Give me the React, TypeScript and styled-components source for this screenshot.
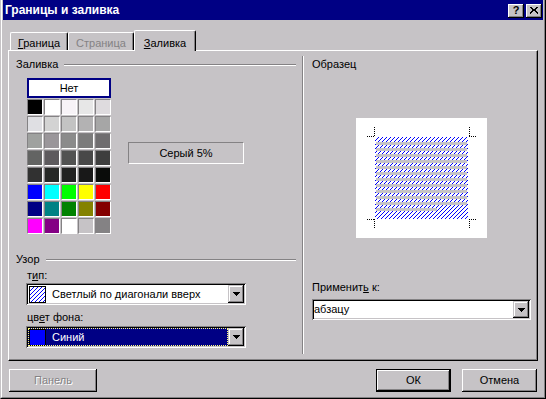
import React from 'react';
import styled, { createGlobalStyle } from 'styled-components';

const GRAY = '#c6c3c6';
const DARK = '#848284';
const NAVY = '#000084';
const FONT = `"Liberation Sans", Arial, sans-serif`;

const GlobalStyle = createGlobalStyle`
  html, body { margin: 0; padding: 0; background: ${GRAY}; }
  body { font-family: ${FONT}; font-size: 11px; line-height: 13px; color: #000; }
  *, *::before, *::after { box-sizing: border-box; }
`;

const Window = styled.div`
  width: 546px;
  height: 399px;
  background: ${GRAY};
  border-left: 1px solid ${GRAY};
  border-right: 1px solid #000;
  border-bottom: 1px solid #000;
  display: flex;
`;

const Frame = styled.div`
  flex: 1;
  display: flex;
  flex-direction: column;
  border-left: 1px solid #fff;
  border-right: 1px solid ${DARK};
  border-bottom: 1px solid ${DARK};
  padding: 0 1px 1px 1px;
`;

const TitleBar = styled.div`
  height: 20px;
  background: ${NAVY};
  display: flex;
  align-items: center;
  padding: 0 1px 0 2px;
`;

const Title = styled.div`
  flex: 1;
  color: #fff;
  font-weight: bold;
  font-size: 12px;
  line-height: 14px;
`;

const CaptionButton = styled.div<{ $gap?: number }>`
  width: 16px;
  height: 14px;
  margin-left: ${p => p.$gap ?? 0}px;
  margin-top: 2px;
  background: ${GRAY};
  box-shadow: inset -1px -1px #000, inset 1px 1px #fff, inset -2px -2px ${DARK};
  display: flex;
  align-items: center;
  justify-content: center;
  font-weight: bold;
  font-size: 11px;
  line-height: 11px;
  padding-bottom: 1px;
`;

const Body = styled.div`
  display: flex;
  flex-direction: column;
  padding: 10px 5px 0 5px;
`;

const TabsRow = styled.div`
  display: flex;
  align-items: flex-end;
  height: 20px;
  padding-left: 2px;
`;

const Tab = styled.div<{ $w: number; $active?: boolean; $disabled?: boolean }>`
  width: ${p => p.$w}px;
  height: ${p => (p.$active ? 21 : 18)}px;
  margin-bottom: ${p => (p.$active ? -1 : 0)}px;
  position: relative;
  z-index: ${p => (p.$active ? 2 : 0)};
  background: ${GRAY};
  border-top: 1px solid #fff;
  border-left: 1px solid #fff;
  border-right: 1px solid #000;
  border-top-left-radius: 2px;
  border-top-right-radius: 2px;
  box-shadow: inset -1px 0 ${DARK};
  display: flex;
  justify-content: center;
  padding-top: ${p => (p.$active ? 6 : 4)}px;
  color: ${p => (p.$disabled ? DARK : '#000')};
`;

const Panel = styled.div`
  width: 530px;
  height: 311px;
  display: flex;
  border-top: 1px solid #fff;
  border-left: 1px solid #fff;
  border-right: 1px solid #000;
  border-bottom: 1px solid #000;
  box-shadow: inset -1px -1px ${DARK};
`;

const LeftCol = styled.div`
  width: 287px;
  display: flex;
  flex-direction: column;
  padding: 7px 0 0 7px;
`;

const Divider = styled.div`
  width: 2px;
  margin: 5px 0 6px 6px;
  border-left: 1px solid ${DARK};
  border-right: 1px solid #fff;
`;

const RightCol = styled.div`
  flex: 1;
  display: flex;
  flex-direction: column;
  padding: 7px 0 0 8px;
`;

const GroupHeader = styled.div<{ $mt?: number }>`
  display: flex;
  align-items: center;
  margin-top: ${p => p.$mt ?? 0}px;
  height: 13px;
`;

const GroupLine = styled.div`
  flex: 1;
  height: 2px;
  margin-left: 6px;
  border-top: 1px solid ${DARK};
  border-bottom: 1px solid #fff;
`;

const Label = styled.div<{ $mt?: number; $ml?: number }>`
  margin-top: ${p => p.$mt ?? 0}px;
  margin-left: ${p => p.$ml ?? 0}px;
  height: 13px;
  white-space: nowrap;
`;

const Ul = styled.span`
  text-decoration: underline;
`;

const FillArea = styled.div`
  display: flex;
  align-items: flex-start;
  margin: 7px 0 0 11px;
`;

const PaletteCol = styled.div`
  display: flex;
  flex-direction: column;
`;

const NoneButton = styled.div`
  width: 84px;
  height: 20px;
  background: #fff;
  border: 2px solid ${NAVY};
  display: flex;
  align-items: center;
  justify-content: center;
`;

const Palette = styled.div`
  display: grid;
  grid-template-columns: repeat(5, 16px);
  grid-auto-rows: 16px;
  gap: 1px;
  margin-top: 1px;
`;

const Cell = styled.div<{ $c: string }>`
  background: ${p => p.$c};
  border-top: 1px solid ${DARK};
  border-left: 1px solid ${DARK};
  border-bottom: 1px solid #fff;
  border-right: 1px solid #fff;
`;

const ShadeBox = styled.div`
  width: 116px;
  height: 22px;
  margin: 64px 0 0 17px;
  border-top: 1px solid ${DARK};
  border-left: 1px solid ${DARK};
  border-bottom: 1px solid #fff;
  border-right: 1px solid #fff;
  display: flex;
  align-items: center;
  justify-content: center;
`;

const Combo = styled.div<{ $w: number; $h: number; $mt?: number; $ml?: number }>`
  width: ${p => p.$w}px;
  height: ${p => p.$h}px;
  margin-top: ${p => p.$mt ?? 0}px;
  margin-left: ${p => p.$ml ?? 0}px;
  background: #fff;
  padding: 2px;
  display: flex;
  box-shadow: inset 1px 1px ${DARK}, inset -1px -1px #fff, inset 2px 2px #000, inset -2px -2px ${GRAY};
`;

const ComboField = styled.div<{ $selected?: boolean }>`
  flex: 1;
  display: flex;
  align-items: center;
  gap: 6px;
  padding-left: 1px;
  background: ${p => (p.$selected ? NAVY : '#fff')};
  color: ${p => (p.$selected ? '#fff' : '#000')};
  outline: ${p => (p.$selected ? '1px dotted #ffff7b' : 'none')};
  outline-offset: -1px;
`;

const PlainField = styled.div`
  flex: 1;
  display: flex;
  align-items: center;
  padding-left: 0;
`;

const DropButton = styled.div`
  width: 16px;
  background: ${GRAY};
  box-shadow: inset -1px -1px #000, inset 1px 1px ${GRAY}, inset -2px -2px ${DARK}, inset 2px 2px #fff;
  display: flex;
  align-items: center;
  justify-content: center;
`;

const Swatch = styled.div<{ $c?: string }>`
  width: 17px;
  height: 17px;
  border: 1px solid #000;
  background: ${p => p.$c ?? '#fff'};
  display: flex;
`;

const PreviewWrap = styled.div`
  margin: 47px 0 0 44px;
  width: 131px;
  height: 120px;
  display: flex;
`;

const ButtonRow = styled.div`
  display: flex;
  margin-top: 8px;
  padding: 0 6px 0 1px;
`;

const PushButton = styled.div<{ $w: number; $default?: boolean; $disabled?: boolean; $ml?: number }>`
  width: ${p => p.$w}px;
  height: 23px;
  margin-left: ${p => p.$ml ?? 0}px;
  background: ${GRAY};
  display: flex;
  align-items: center;
  justify-content: center;
  color: ${p => (p.$disabled ? DARK : '#000')};
  text-shadow: ${p => (p.$disabled ? '1px 1px #fff' : 'none')};
  border: ${p => (p.$default ? '1px solid #000' : 'none')};
  box-shadow: inset -1px -1px #000, inset 1px 1px #fff, inset -2px -2px ${DARK};
`;

const Spacer = styled.div`
  flex: 1;
`;

const COLORS: string[][] = [
  ['#000000', '#ffffff', '#f7f3f7', '#e7e7e7', '#dedbde'],
  ['#dfdfe3', '#d3d3d3', '#c3c3c3', '#b3b2b3', '#a6a6a6'],
  ['#9fa19f', '#9a969a', '#8b8b8b', '#7b7b7b', '#6f6d6f'],
  ['#636463', '#5d5a5d', '#525252', '#484848', '#3e3e3e'],
  ['#313131', '#262826', '#212121', '#181818', '#0a0c0a'],
  ['#0000ff', '#00ffff', '#00ff00', '#ffff00', '#ff0000'],
  ['#000084', '#008284', '#008200', '#848200', '#840000'],
  ['#ff00ff', '#840084', '#ffffff', '#c6c3c6', '#848284'],
];

// pixel path for a "light up diagonal" hatch
const diagPath = (ox: number, oy: number, w: number, h: number, phase = 3) => {
  let d = '';
  for (let y = 0; y < h; y++) {
    for (let x = 0; x < w; x++) {
      if ((x + y) % 4 === phase) d += `M${ox + x} ${oy + y}h1v1h-1z`;
    }
  }
  return d;
};

const Arrow = () => (
  <svg width="7" height="4" viewBox="0 0 7 4" shapeRendering="crispEdges">
    <path d="M0 0h7v1h-7zM1 1h5v1h-5zM2 2h3v1h-3zM3 3h1v1h-1z" fill="#000" />
  </svg>
);

const CLOSE_D = (() => {
  let d = '';
  for (let i = 0; i < 7; i++) {
    const a = i < 3 ? i : i + 1;
    const b = i < 3 ? 6 - i : 5 - i;
    d += `M${a} ${i}h2v1h-2zM${b} ${i}h2v1h-2z`;
  }
  return d;
})();

const CloseGlyph = () => (
  <svg width="8" height="7" viewBox="0 0 8 7" shapeRendering="crispEdges">
    <path d={CLOSE_D} fill="#000" />
  </svg>
);

const SWATCH_D = diagPath(0, 0, 15, 15);

const PatternIcon = () => (
  <svg width="15" height="15" viewBox="0 0 15 15" shapeRendering="crispEdges">
    <rect width="15" height="15" fill="#fff" />
    <path d={SWATCH_D} fill="#0000ff" />
  </svg>
);

// hatch split into row bands so each path stays small
const PREVIEW_BANDS = Array.from({ length: 14 }, (_, i) => {
  const y0 = i * 6;
  const h = Math.min(6, 82 - y0);
  return h > 0 ? diagPath(19, 19 + y0, 93, h, (3 - (y0 % 4) + 4) % 4) : '';
}).filter(Boolean);

const Corner = ({ hx1, hx2, hy, vx, vy1, vy2 }: { hx1: number; hx2: number; hy: number; vx: number; vy1: number; vy2: number }) => {
  let d = '';
  for (let x = hx1; x < hx2; x += 2) d += `M${x} ${hy}h1v1h-1z`;
  for (let y = vy1; y < vy2; y += 2) d += `M${vx} ${y}h1v1h-1z`;
  return <path d={d} fill="#000" />;
};

const PreviewDrawing = () => {
  const bars = Array.from({ length: 12 }, (_, i) => i);
  return (
    <svg width="131" height="120" viewBox="0 0 131 120" shapeRendering="crispEdges">
      <rect width="131" height="120" fill="#fff" />
      {PREVIEW_BANDS.map((d, i) => (
        <path key={i} d={d} fill="#0000ff" />
      ))}
      {bars.map(i => (
        <rect key={i} x="20" y={19 + 5 + i * 6} width={i === 11 ? 61 : 91} height="3" fill={GRAY} />
      ))}
      <Corner hx1={11} hx2={19} hy={18} vx={18} vy1={9} vy2={19} />
      <Corner hx1={113} hx2={121} hy={18} vx={113} vy1={9} vy2={19} />
      <Corner hx1={11} hx2={19} hy={101} vx={18} vy1={101} vy2={111} />
      <Corner hx1={113} hx2={121} hy={101} vx={113} vy1={101} vy2={111} />
    </svg>
  );
};

export default function App() {
  return (
    <>
      <GlobalStyle />
      <Window>
        <Frame>
          <TitleBar>
            <Title>Границы и заливка</Title>
            <CaptionButton>?</CaptionButton>
            <CaptionButton $gap={2}>
              <CloseGlyph />
            </CaptionButton>
          </TitleBar>
          <Body>
            <TabsRow>
              <Tab $w={58}>
                <span><Ul>Г</Ul>раница</span>
              </Tab>
              <Tab $w={66} $disabled>
                <span>Страница</span>
              </Tab>
              <Tab $w={62} $active>
                <span><Ul>З</Ul>аливка</span>
              </Tab>
            </TabsRow>
            <Panel>
              <LeftCol>
                <GroupHeader>
                  <span>Заливка</span>
                  <GroupLine />
                </GroupHeader>
                <FillArea>
                  <PaletteCol>
                    <NoneButton>Нет</NoneButton>
                    <Palette>
                      {COLORS.flat().map((c, i) => (
                        <Cell key={i} $c={c} />
                      ))}
                    </Palette>
                  </PaletteCol>
                  <ShadeBox>Серый 5%</ShadeBox>
                </FillArea>
                <GroupHeader $mt={19}>
                  <span>Узор</span>
                  <GroupLine />
                </GroupHeader>
                <Label $mt={3} $ml={11}>
                  т<Ul>и</Ul>п:
                </Label>
                <Combo $w={220} $h={22} $mt={1} $ml={10}>
                  <ComboField>
                    <Swatch>
                      <PatternIcon />
                    </Swatch>
                    <span>Светлый по диагонали вверх</span>
                  </ComboField>
                  <DropButton>
                    <Arrow />
                  </DropButton>
                </Combo>
                <Label $mt={6} $ml={11}>
                  цв<Ul>е</Ul>т фона:
                </Label>
                <Combo $w={220} $h={22} $mt={2} $ml={10}>
                  <ComboField $selected>
                    <Swatch $c="#0000ff" />
                    <span>Синий</span>
                  </ComboField>
                  <DropButton>
                    <Arrow />
                  </DropButton>
                </Combo>
              </LeftCol>
              <Divider />
              <RightCol>
                <Label>Образец</Label>
                <PreviewWrap>
                  <PreviewDrawing />
                </PreviewWrap>
                <Label $mt={43}>
                  Применит<Ul>ь</Ul> к:
                </Label>
                <Combo $w={219} $h={21} $mt={5}>
                  <PlainField>абзацу</PlainField>
                  <DropButton>
                    <Arrow />
                  </DropButton>
                </Combo>
              </RightCol>
            </Panel>
          </Body>
          <ButtonRow>
            <PushButton $w={88} $ml={5} $disabled>Панель</PushButton>
            <Spacer />
            <PushButton $w={75} $default>ОК</PushButton>
            <PushButton $w={75} $ml={11}>Отмена</PushButton>
          </ButtonRow>
        </Frame>
      </Window>
    </>
  );
}
